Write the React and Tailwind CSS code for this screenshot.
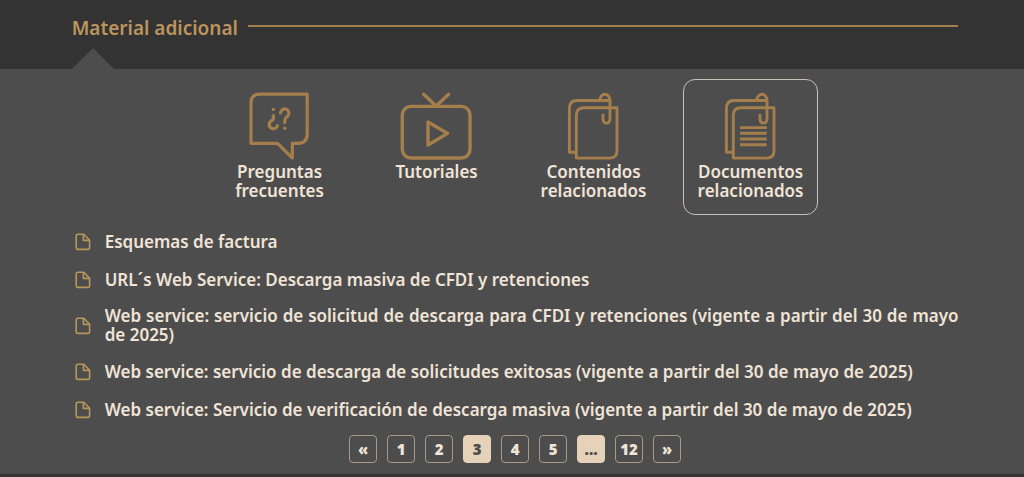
import React, { useState } from "react";

function FaqIcon() {
  return (
    <svg viewBox="1 0 80 70" className="h-[70px] w-20" fill="none" stroke="currentColor" strokeWidth="3.2" strokeLinejoin="round" strokeLinecap="round" aria-hidden="true">
      <path d="M12 52.3V12Q12 3.2 21 3.2H68.2V43Q68.2 52.3 59 52.3H53.3V67L38.5 52.3Z" />
      <path d="M34.3 24.5V28C33.8 29.8 30.2 29.8 30.2 33.5A4.2 4.2 0 0 0 38.5 34.5" />
      <path d="M41.5 22A4.2 4.2 0 1 1 48.4 25.4C46.4 26.8 45.7 27.5 45.7 31.5" />
      <circle cx="34.3" cy="18.4" r="1.7" fill="currentColor" stroke="none" />
      <circle cx="45.7" cy="37.2" r="1.7" fill="currentColor" stroke="none" />
    </svg>
  );
}

function TvIcon() {
  return (
    <svg viewBox="1 0 80 70" className="h-[70px] w-20" fill="none" stroke="currentColor" strokeWidth="3.4" strokeLinejoin="round" strokeLinecap="round" aria-hidden="true">
      <rect x="6.3" y="15.4" width="67.7" height="51.6" rx="8.5" />
      <path d="M27.6 3.2L40.2 15L52.6 3.2" />
      <path d="M32 31V54L51.6 42.4Z" />
    </svg>
  );
}

function PagesIcon({ lines }) {
  return (
    <svg viewBox="1 0 80 70" className="h-[70px] w-20" fill="none" stroke="currentColor" strokeWidth="2.9" strokeLinejoin="round" aria-hidden="true">
      <path d="M57 9.5H24Q16.4 9.5 16.4 17.5V61.2H23.3" />
      <path d="M23.3 67.1V24.5Q23.3 16.8 31 16.8H64V60Q64 67.1 56.5 67.1Z" />
      <path d="M46.8 9.5A5.1 6.3 0 0 1 57 9.5V28.2A3.5 3.9 0 0 1 50 28.2V22.8" />
      {lines && <path d="M30 36.6H56.7M30 42.3H56.7M30 48H56.7M30 53.7H56.7" />}
    </svg>
  );
}

function FileIcon() {
  return (
    <svg viewBox="0 0 16 18" className="mt-0.5 h-[18px] w-4 shrink-0 text-[#b8975a]" fill="none" stroke="currentColor" strokeWidth="1.6" strokeLinejoin="round" aria-hidden="true">
      <path d="M3 1.3H8.8L14.6 7.2V14.7Q14.6 16.4 13 16.4H3Q1.2 16.4 1.2 14.7V3Q1.2 1.3 3 1.3Z" />
      <path d="M8.4 1.5V7.4H14.4" />
    </svg>
  );
}

const tabs = [
  { label: "Preguntas frecuentes", icon: <FaqIcon /> },
  { label: "Tutoriales", icon: <TvIcon /> },
  { label: "Contenidos relacionados", icon: <PagesIcon /> },
  { label: "Documentos relacionados", icon: <PagesIcon lines /> },
];

const documents = [
  "Esquemas de factura",
  "URL´s Web Service: Descarga masiva de CFDI y retenciones",
  "Web service: servicio de solicitud de descarga para CFDI y retenciones (vigente a partir del 30 de mayo de 2025)",
  "Web service: servicio de descarga de solicitudes exitosas (vigente a partir del 30 de mayo de 2025)",
  "Web service: Servicio de verificación de descarga masiva (vigente a partir del 30 de mayo de 2025)",
];

const pages = ["«", "1", "2", "3", "4", "5", "...", "12", "»"];

export default function App() {
  const [tab, setTab] = useState(3);
  const [page, setPage] = useState("3");

  return (
    <div className="min-h-screen bg-[#333333] font-['Noto_Sans',sans-serif] font-[650] text-[#f0e4d7]">
      <header className="pr-[6.4%] pl-[7%]">
        <div className="flex h-12 items-center gap-[10px] pt-2">
          <h2 className="text-[19px] leading-7 text-[#bc955c]">Material adicional</h2>
          <div className="mb-1 h-0.5 flex-1 bg-[#a57f4b]" />
        </div>
        <svg viewBox="0 0 42 21" className="h-[21px] w-[42px]" aria-hidden="true">
          <path d="M0 21L21 0L42 21Z" fill="#4d4d4d" />
        </svg>
      </header>

      <main className="bg-[#4d4d4d] pt-[10px] pr-[6.4%] pb-[11px] pl-[7%]">
        <nav className="flex justify-center gap-[22px]">
          {tabs.map((t, i) => (
            <button
              key={t.label}
              type="button"
              aria-pressed={tab === i}
              onClick={() => setTab(i)}
              className={`flex w-[135px] flex-col items-center gap-px rounded-xl border px-2 pt-[11px] pb-[14px] text-[17px] leading-[19px] ${tab === i ? "border-[#c9c0b6]" : "border-transparent"}`}
            >
              <span className="text-[#a57f4b]">{t.icon}</span>
              <span>{t.label}</span>
            </button>
          ))}
        </nav>

        <ul className="mt-[15px] flex flex-col gap-4 text-justify text-[17px] leading-[19px]">
          {documents.map((d) => (
            <li key={d} className="flex min-h-[22px] items-center gap-[14px] pl-[3px]">
              <FileIcon />
              <a href="#documento">{d}</a>
            </li>
          ))}
        </ul>

        <nav aria-label="Paginación" className="mt-[15px] flex justify-center gap-[10px]">
          {pages.map((p) => (
            <button
              key={p}
              type="button"
              onClick={() => setPage(p)}
              className={`flex size-7 items-center justify-center rounded-sm border font-['Open_Sans',sans-serif] text-[15px] font-extrabold ${p === page || p === "..." ? "border-[#e6d2b8] bg-[#e6d2b8] text-[#4d4d4d]" : "border-[#a99986]"}`}
            >
              {p}
            </button>
          ))}
        </nav>
      </main>
    </div>
  );
}
